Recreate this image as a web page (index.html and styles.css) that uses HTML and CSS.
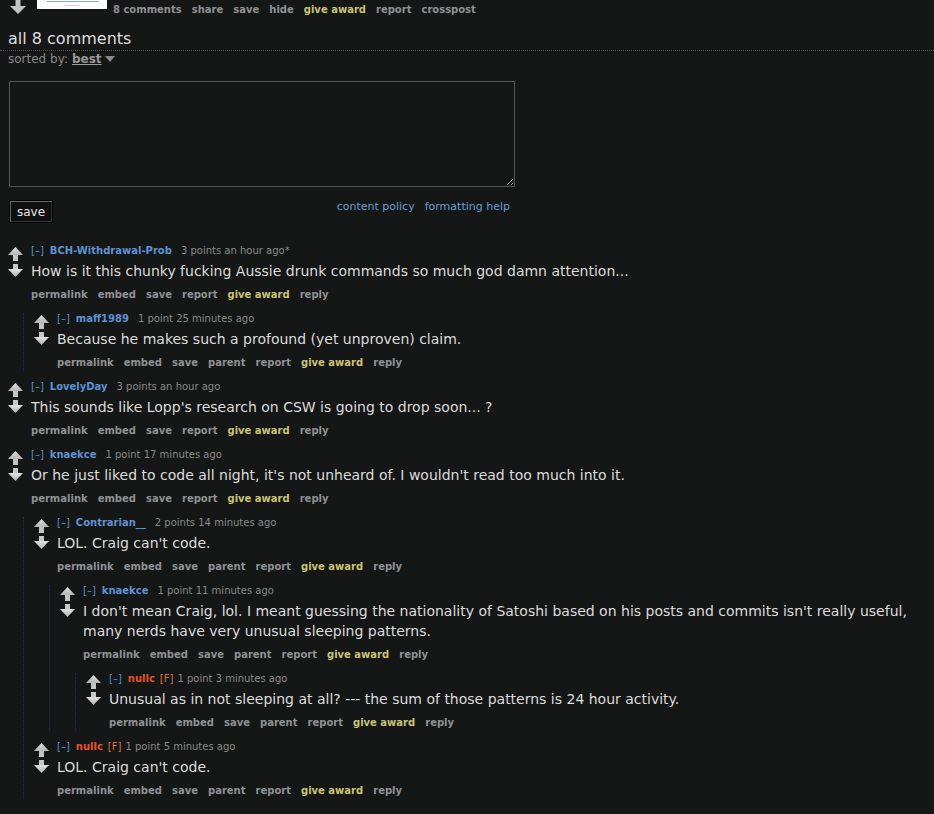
FILE: index.html
```html
<!DOCTYPE html>
<html>
<head>
<meta charset="utf-8">
<link rel="stylesheet" href="styles.css">
</head>
<body>
<div class="postbar">
  <svg class="postarrow" width="16" height="15" viewBox="0 0 16 15"><rect x="5.5" y="0" width="5" height="6" fill="#c4c4c4"/><polygon points="0,6 16,6 8,14" fill="#c4c4c4"/></svg>
  <div class="thumb"><span class="tl1"></span><span class="tl2"></span></div>
  <ul class="flat">
    <li><a>8 comments</a></li><li><a>share</a></li><li><a>save</a></li><li><a>hide</a></li><li><a class="award">give award</a></li><li><a>report</a></li><li><a>crosspost</a></li>
  </ul>
</div>
<div class="panestack">
  <div class="title">all 8 comments</div>
</div>
<div class="sort">sorted by: <span class="sel">best</span><span class="drop"></span></div>
<form class="usertext">
  <textarea class="ta"></textarea>
  <div class="bottom">
    <button type="button" class="savebtn">save</button>
    <div class="helplinks"><a>content policy</a><a>formatting help</a></div>
  </div>
</form>

<div class="sitetable">
  <div class="comment">
    <div class="row"><div class="midcol"><svg width="15" height="33" viewBox="0 0 15 33"><use href="#arrows"/></svg></div>
      <div class="entry">
        <p class="tagline"><a class="expand">[–]</a><a class="author">BCH-Withdrawal-Prob</a><span class="score">3 points an hour ago*</span></p>
        <div class="md">How is it this chunky fucking Aussie drunk commands so much god damn attention...</div>
        <ul class="flat buttons"><li><a>permalink</a></li><li><a>embed</a></li><li><a>save</a></li><li><a>report</a></li><li><a class="award">give award</a></li><li><a>reply</a></li></ul>
      </div>
    </div>
    <div class="child">
      <div class="comment">
        <div class="row"><div class="midcol"><svg width="15" height="33" viewBox="0 0 15 33"><use href="#arrows"/></svg></div>
          <div class="entry">
            <p class="tagline"><a class="expand">[–]</a><a class="author">maff1989</a><span class="score">1 point 25 minutes ago</span></p>
            <div class="md">Because he makes such a profound (yet unproven) claim.</div>
            <ul class="flat buttons"><li><a>permalink</a></li><li><a>embed</a></li><li><a>save</a></li><li><a>parent</a></li><li><a>report</a></li><li><a class="award">give award</a></li><li><a>reply</a></li></ul>
          </div>
        </div>
      </div>
    </div>
  </div>

  <div class="comment">
    <div class="row"><div class="midcol"><svg width="15" height="33" viewBox="0 0 15 33"><use href="#arrows"/></svg></div>
      <div class="entry">
        <p class="tagline"><a class="expand">[–]</a><a class="author">LovelyDay</a><span class="score">3 points an hour ago</span></p>
        <div class="md">This sounds like Lopp's research on CSW is going to drop soon... ?</div>
        <ul class="flat buttons"><li><a>permalink</a></li><li><a>embed</a></li><li><a>save</a></li><li><a>report</a></li><li><a class="award">give award</a></li><li><a>reply</a></li></ul>
      </div>
    </div>
  </div>

  <div class="comment">
    <div class="row"><div class="midcol"><svg width="15" height="33" viewBox="0 0 15 33"><use href="#arrows"/></svg></div>
      <div class="entry">
        <p class="tagline"><a class="expand">[–]</a><a class="author">knaekce</a><span class="score">1 point 17 minutes ago</span></p>
        <div class="md">Or he just liked to code all night, it's not unheard of. I wouldn't read too much into it.</div>
        <ul class="flat buttons"><li><a>permalink</a></li><li><a>embed</a></li><li><a>save</a></li><li><a>report</a></li><li><a class="award">give award</a></li><li><a>reply</a></li></ul>
      </div>
    </div>
    <div class="child">
      <div class="comment">
        <div class="row"><div class="midcol"><svg width="15" height="33" viewBox="0 0 15 33"><use href="#arrows"/></svg></div>
          <div class="entry">
            <p class="tagline"><a class="expand">[–]</a><a class="author">Contrarian__</a><span class="score">2 points 14 minutes ago</span></p>
            <div class="md">LOL. Craig can't code.</div>
            <ul class="flat buttons"><li><a>permalink</a></li><li><a>embed</a></li><li><a>save</a></li><li><a>parent</a></li><li><a>report</a></li><li><a class="award">give award</a></li><li><a>reply</a></li></ul>
          </div>
        </div>
        <div class="child">
          <div class="comment">
            <div class="row"><div class="midcol"><svg width="15" height="33" viewBox="0 0 15 33"><use href="#arrows"/></svg></div>
              <div class="entry">
                <p class="tagline"><a class="expand">[–]</a><a class="author">knaekce</a><span class="score">1 point 11 minutes ago</span></p>
                <div class="md">I don't mean Craig, lol. I meant guessing the nationality of Satoshi based on his posts and commits isn't really useful, many nerds have very unusual sleeping patterns.</div>
                <ul class="flat buttons"><li><a>permalink</a></li><li><a>embed</a></li><li><a>save</a></li><li><a>parent</a></li><li><a>report</a></li><li><a class="award">give award</a></li><li><a>reply</a></li></ul>
              </div>
            </div>
            <div class="child">
              <div class="comment">
                <div class="row"><div class="midcol"><svg width="15" height="33" viewBox="0 0 15 33"><use href="#arrows"/></svg></div>
                  <div class="entry">
                    <p class="tagline"><a class="expand">[–]</a><a class="author friend">nullc</a><span class="flag">[F]</span><span class="score tight">1 point 3 minutes ago</span></p>
                    <div class="md">Unusual as in not sleeping at all? --- the sum of those patterns is 24 hour activity.</div>
                    <ul class="flat buttons"><li><a>permalink</a></li><li><a>embed</a></li><li><a>save</a></li><li><a>parent</a></li><li><a>report</a></li><li><a class="award">give award</a></li><li><a>reply</a></li></ul>
                  </div>
                </div>
              </div>
            </div>
          </div>
        </div>
      </div>
      <div class="comment">
        <div class="row"><div class="midcol"><svg width="15" height="33" viewBox="0 0 15 33"><use href="#arrows"/></svg></div>
          <div class="entry">
            <p class="tagline"><a class="expand">[–]</a><a class="author friend">nullc</a><span class="flag">[F]</span><span class="score tight">1 point 5 minutes ago</span></p>
            <div class="md">LOL. Craig can't code.</div>
            <ul class="flat buttons"><li><a>permalink</a></li><li><a>embed</a></li><li><a>save</a></li><li><a>parent</a></li><li><a>report</a></li><li><a class="award">give award</a></li><li><a>reply</a></li></ul>
          </div>
        </div>
      </div>
    </div>
  </div>
</div>

<svg class="defs" width="0" height="0">
  <defs>
    <linearGradient id="ag" x1="0" y1="0" x2="0" y2="1"><stop offset="0" stop-color="#e2e2e2"/><stop offset="1" stop-color="#b4b4b4"/></linearGradient>
    <g id="arrows">
      <polygon points="7.5,2 15,10 0,10" fill="url(#ag)"/>
      <rect x="5" y="10" width="5" height="6" fill="#c4c4c4"/>
      <rect x="5" y="19" width="5" height="5" fill="#c8c8c8"/>
      <polygon points="0,24 15,24 7.5,32" fill="url(#ag)"/>
    </g>
  </defs>
</svg>
</body>
</html>
```

FILE: styles.css
```css
html, body {
  margin: 0;
  padding: 0;
  background: #151616;
}
body {
  font-family: "DejaVu Sans", Verdana, sans-serif;
  color: #d8d8d8;
  width: 934px;
  height: 814px;
  overflow: hidden;
}
a { cursor: pointer; }

.postbar {
  display: flex;
  align-items: flex-start;
  height: 18px;
}
.postarrow {
  margin-left: 10px;
  margin-top: 0;
  flex: none;
}
.thumb {
  width: 70px;
  height: 9px;
  background: #fff;
  margin-left: 11px;
  position: relative;
  flex: none;
}
.tl1 {
  position: absolute;
  left: 10px; top: 1px;
  width: 52px; height: 1px;
  background: #8fa6d8;
}
.tl2 {
  position: absolute;
  left: 28px; top: 5px;
  width: 14px; height: 1px;
  background: #d0d0d0;
}
.flat {
  list-style: none;
  margin: 0;
  padding: 0;
  display: flex;
  font-size: 10px;
  font-weight: bold;
  line-height: 12px;
}
.flat li a {
  color: #8f9294;
  margin-right: 10px;
}
.flat li a.award { color: #c9c477; }
.postbar .flat {
  margin-left: 6px;
  margin-top: 4px;
}

.panestack {
  margin-top: 10px;
  border-bottom: 1px dotted #4a4a4a;
}
.title {
  font-size: 16px;
  line-height: 22px;
  padding-left: 8px;
  color: #dedede;
}
.sort {
  font-size: 12px;
  line-height: 14px;
  color: #8a8a8a;
  padding-left: 8px;
  margin-top: 1px;
  display: flex;
  align-items: center;
}
.sort .sel {
  font-weight: bold;
  text-decoration: underline;
  margin-left: 4px;
  color: #9a9a9a;
}
.drop {
  width: 0; height: 0;
  border-left: 5px solid transparent;
  border-right: 5px solid transparent;
  border-top: 6px solid #888;
  margin-left: 3px;
}

.usertext {
  margin: 15px 0 0 9px;
  width: 506px;
}
.ta {
  display: block;
  box-sizing: border-box;
  width: 506px;
  height: 106px;
  background: #151616;
  border: 1px solid #555;
  margin: 0;
  padding: 2px;
  resize: both;
}
.bottom {
  display: flex;
  justify-content: space-between;
  align-items: flex-start;
  margin-top: 13px;
}
.savebtn {
  box-sizing: border-box;
  width: 44px;
  height: 23px;
  background: #0f0f0f;
  color: #e8e8e8;
  border: 1px solid #000;
  box-shadow: inset 1px 1px 0 #6a6a6a, inset -1px -1px 0 #333;
  font-family: "DejaVu Sans", Verdana, sans-serif;
  font-size: 12px;
  padding: 0;
}
.helplinks {
  display: flex;
  gap: 10px;
  font-size: 11px;
  line-height: 14px;
  margin-top: 0;
  padding-right: 5px;
}
.helplinks a { color: #6a9bd5; }

.sitetable {
  margin-top: 22px;
  padding-left: 8px;
}
.comment + .comment { margin-top: 10px; }
.row {
  display: flex;
  align-items: flex-start;
}
.midcol {
  width: 15px;
  flex: none;
  margin-right: 8px;
  height: 33px;
}
.midcol svg { display: block; }
.entry {
  padding-bottom: 2px;
  min-width: 0;
}
.tagline {
  margin: 0;
  font-size: 10px;
  line-height: 12px;
  color: #8a8a8a;
  white-space: nowrap;
}
.expand {
  color: #5b8fcc;
  margin-right: 6px;
}
.author {
  color: #5d93d2;
  font-weight: bold;
  margin-right: 9px;
}
.author.friend {
  color: #e8532b;
  margin-right: 5px;
}
.flag {
  color: #d9733a;
  margin-right: 4px;
}
.md {
  font-size: 14px;
  line-height: 20px;
  margin-top: 4px;
  color: #dcdcdc;
}
.buttons { margin-top: 8px; }
.child {
  margin-left: 15px;
  padding-left: 10px;
  border-left: 1px dotted #23236e;
  margin-top: 10px;
}
.defs { position: absolute; width: 0; height: 0; }
```
